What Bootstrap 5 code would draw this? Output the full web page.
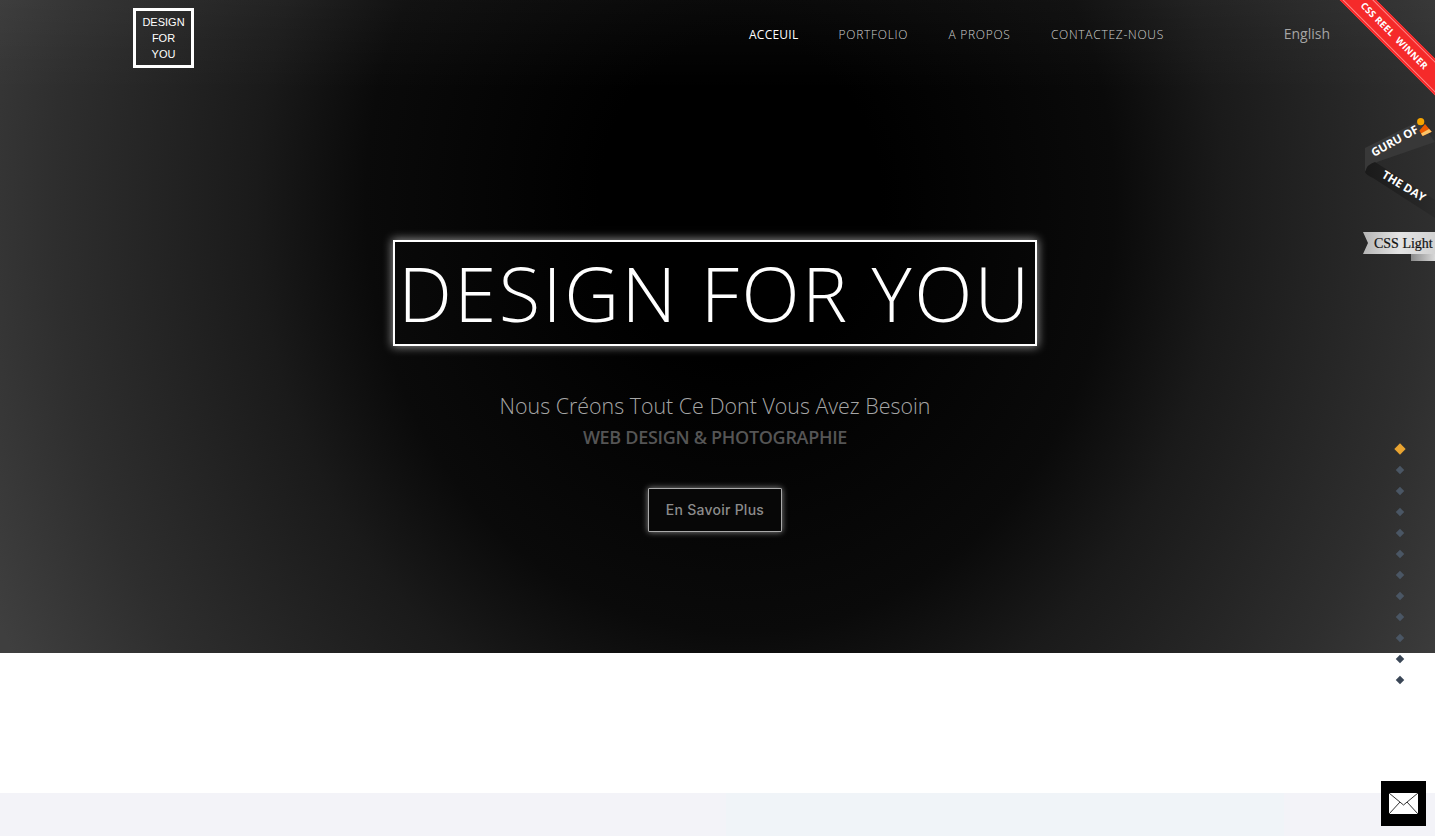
<!DOCTYPE html>
<html lang="fr">
<head>
    <meta charset="UTF-8">
    <meta name="viewport" content="width=device-width, initial-scale=1.0">
    <title>Design For You</title>
    <link href="https://cdn.jsdelivr.net/npm/bootstrap@5.3.0/dist/css/bootstrap.min.css" rel="stylesheet">
    <style>
        html, body { height: 836px; overflow: hidden; }
        body { background: #fff; font-family: "Open Sans", "Noto Sans", sans-serif; }
        .hero {
            height: 653px;
            background:
                linear-gradient(rgba(255,255,255,.035), transparent 90px),
                radial-gradient(ellipse 780px 900px at 740px 200px, #000 18%, #0a0a0a 48%, #1a1a1a 62%, #2e2e2e 88%, #3f3f3f 106%);
            position: relative;
        }
        .topbar { height: 68px; padding: 8px 105px 0 133px; }
        .logo-box {
            width: 61px; height: 60px;
            border: 3px solid #fff;
            color: #fff;
            font: 11px/16px "Liberation Sans", Arial, sans-serif;
            flex-direction: column;
        }
        .menu { margin-left: 555px; padding-top: 19px; gap: 41px; font-size: 12px; font-weight: 300; line-height: 16px; }
        .menu a { color: #d0d0d0; text-decoration: none; letter-spacing: .72px; margin-right: -.7px; }
        .menu a.on { color: #fff; font-weight: 400; letter-spacing: .25px; margin-right: -1px; }
        .lang { margin-left: auto; padding-top: 16px; font-size: 14px; line-height: 20px; color: #a5a5a5; }
        .intro { padding: 172px 5px 0 0; }
        .title-box {
            width: 644px; height: 106px;
            border: 2px solid #fff;
            box-shadow: 0 0 9px 1px rgba(255,255,255,.55);
            color: #fff;
            font-size: 76px; font-weight: 300; line-height: 1; letter-spacing: 2.4px;
            white-space: nowrap;
        }
        .sub-line { margin-top: 44px; font-size: 21.4px; font-weight: 300; line-height: 32px; color: #a6a6a6; }
        .sub-strong { font-size: 18px; font-weight: 600; line-height: 30px; color: #555; letter-spacing: -.3px; }
        .more-btn {
            margin-top: 36px;
            width: 134px; height: 44px;
            padding: 0;
            background: #070707;
            border: 1px solid #aaa;
            border-radius: 1px;
            box-shadow: 0 0 6px rgba(255,255,255,.55);
            color: #8c8c8c;
            font-family: "Inter", sans-serif; font-size: 14px; font-weight: 500; line-height: 42px; letter-spacing: .25px;
        }
        .gap-band { height: 140px; background: #fff; }
        .lower-band { height: 43px; background: #f3f3f8; }
        .lower-inner { width: 558px; height: 100%; margin-left: 726px; background: #f0f4f8; }
        .reel {
            position: absolute; top: 0; right: 0;
            width: 100px; height: 96px; overflow: hidden;
        }
        .reel span {
            position: absolute; top: 23px; left: -21px;
            width: 160px; height: 26px;
            background: #f52a2a;
            box-shadow: inset 0 2px 0 #f52a2a, inset 0 3px 0 #ff8a8a, inset 0 -2px 0 #f52a2a, inset 0 -3px 0 #ff8a8a;
            transform: rotate(45deg);
            color: #fff; font-size: 9.5px; font-weight: 700; line-height: 26px; text-align: center; letter-spacing: .3px;
        }
        .guru { position: absolute; top: 112px; right: 0; }
        .guru text { font-family: "Open Sans", sans-serif; font-size: 11.5px; font-weight: 700; fill: #fff; }
        .css-light {
            position: absolute; top: 232px; right: 0; width: 72px; height: 29px;
        }
        .css-light text { font-family: "Liberation Serif", serif; font-size: 14px; fill: #111; stroke: #111; stroke-width: .2px; }
        .dots { position: absolute; top: 446px; right: 32px; gap: 15px; z-index: 5; }
        .dots i { display: block; width: 6px; height: 6px; background: #4a5664; transform: rotate(45deg); }
        .dots i.on { background: #e8a432; box-shadow: 0 0 0 1px #e8a432; }
        .dots i.low { background: #3a4656; }
        .mail-btn {
            position: absolute; right: 9px; bottom: 10px;
            width: 45px; height: 45px; background: #000; z-index: 5;
        }
    </style>
</head>
<body>

    <section class="hero">
        <div class="topbar d-flex">
            <a class="logo-box d-flex align-items-center justify-content-center text-center text-decoration-none" href="#">
                DESIGN<br>FOR<br>YOU
            </a>
            <nav class="menu d-flex">
                <a class="on" href="#">ACCEUIL</a>
                <a href="#">PORTFOLIO</a>
                <a href="#">A PROPOS</a>
                <a href="#">CONTACTEZ-NOUS</a>
            </nav>
            <div class="lang">English</div>
        </div>

        <div class="intro d-flex flex-column align-items-center text-center">
            <h1 class="title-box d-flex align-items-center justify-content-center m-0">DESIGN FOR YOU</h1>
            <p class="sub-line mb-0">Nous Créons Tout Ce Dont Vous Avez Besoin</p>
            <p class="sub-strong mb-0">WEB DESIGN &amp; PHOTOGRAPHIE</p>
            <button class="btn more-btn" type="button">En Savoir Plus</button>
        </div>

        <div class="reel"><span>CSS REEL&nbsp; WINNER</span></div>

        <svg class="guru" width="72" height="112" viewBox="0 0 72 112">
            <defs>
                <linearGradient id="darkFade" x1="0" y1="0" x2="1" y2="0">
                    <stop offset="0" stop-color="#1a1a1a"/>
                    <stop offset="1" stop-color="#2a2a2a"/>
                </linearGradient>
            </defs>
            <path d="M2 36 L56 9 L72 30 L14 50 L2 60Z" fill="#383838"/>
            <path d="M2 60 Q4 52 12 50 L72 88 V106 L10 66 Q3 63 2 60Z" fill="url(#darkFade)"/>
            <text transform="translate(11 45) rotate(-29)">GURU OF</text>
            <text transform="translate(18 65) rotate(31)">THE DAY</text>
            <circle cx="57.7" cy="9.7" r="3.6" fill="#f6a400"/>
            <path d="M62 12 L68.7 19.7 L59.7 24 L56.3 18.7Z" fill="#ee5a00"/>
            <path d="M68.7 19.7 L59.7 24 L58 21.5 L66 17Z" fill="#f9c56a"/>
        </svg>

        <svg class="css-light" viewBox="0 0 72 29">
            <defs>
                <linearGradient id="tagFill" x1="0" y1="0" x2="1" y2="0">
                    <stop offset="0" stop-color="#b5b5b5"/>
                    <stop offset=".5" stop-color="#e4e4e4"/>
                    <stop offset="1" stop-color="#d2d2d2"/>
                </linearGradient>
                <linearGradient id="tagFold" x1="0" y1="0" x2="1" y2="0">
                    <stop offset="0" stop-color="#8a8a8a"/>
                    <stop offset="1" stop-color="#d8d8d8"/>
                </linearGradient>
            </defs>
            <path d="M48 22 H72 V29 H48Z" fill="url(#tagFold)"/>
            <path d="M0 0 H72 V22 H0 L5 11Z" fill="url(#tagFill)"/>
            <text x="11" y="16">CSS Light</text>
        </svg>
    </section>

    <div class="gap-band"></div>
    <div class="lower-band"><div class="lower-inner"></div></div>

    <div class="dots d-flex flex-column">
        <i class="on"></i><i></i><i></i><i></i><i></i><i></i><i></i><i></i><i></i><i></i><i class="low"></i><i class="low"></i>
    </div>

    <a class="mail-btn d-flex align-items-center justify-content-center" href="#">
        <svg width="29" height="21" viewBox="0 0 29 21">
            <rect width="29" height="21" fill="#fff"/>
            <path d="M0 0 L14.5 12 L29 0 M0 21 L11 9 M29 21 L18 9" fill="none" stroke="#333" stroke-width="1"/>
        </svg>
    </a>

    <script src="https://cdn.jsdelivr.net/npm/bootstrap@5.3.0/dist/js/bootstrap.bundle.min.js"></script>
</body>
</html>
